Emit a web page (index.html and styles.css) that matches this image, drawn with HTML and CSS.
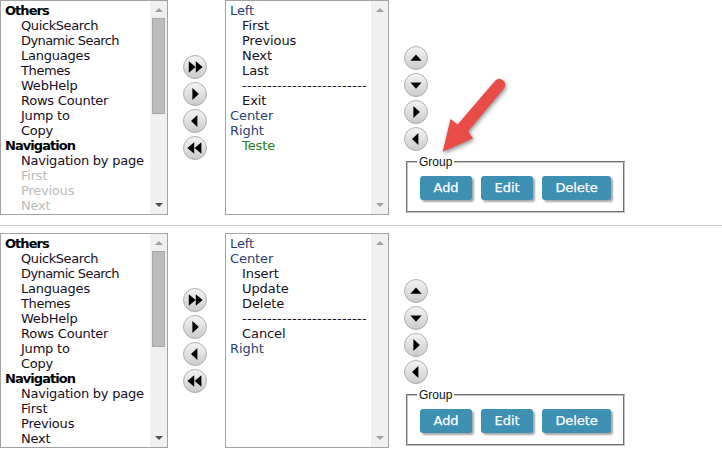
FILE: index.html
```html
<!DOCTYPE html>
<html lang="en">
<head>
<meta charset="utf-8">
<title>Toolbar settings</title>
<link rel="stylesheet" href="styles.css">
</head>
<body>
<svg class="defs" width="0" height="0" aria-hidden="true">
  <defs>
    <linearGradient id="disc" x1="0" y1="0" x2="0" y2="1">
      <stop offset="0" stop-color="#f4f4f4"/><stop offset=".5" stop-color="#e0e0e0"/><stop offset="1" stop-color="#c9c9c9"/>
    </linearGradient>
    <symbol id="base" viewBox="0 0 24 24"><circle cx="12" cy="12" r="11.5" fill="url(#disc)" stroke="#a8a8a8" stroke-width=".9"/></symbol>
    <symbol id="all-right" viewBox="0 0 24 24"><use href="#base"/><path d="M5.8 6.3 12.6 12l-6.8 5.7zM12.8 6.3l6.8 5.7-6.8 5.7z"/></symbol>
    <symbol id="right" viewBox="0 0 24 24"><use href="#base"/><path d="M9.4 6 15.8 12l-6.4 6z"/></symbol>
    <symbol id="left" viewBox="0 0 24 24"><use href="#base"/><path d="M14.4 6 8 12l6.4 6z"/></symbol>
    <symbol id="all-left" viewBox="0 0 24 24"><use href="#base"/><path d="M11.2 6.3 4.4 12l6.8 5.7zM18.4 6.3 11.6 12l6.8 5.7z"/></symbol>
    <symbol id="up" viewBox="0 0 24 24"><use href="#base"/><path d="M6.4 14.8 12 8.4l5.6 6.4z"/></symbol>
    <symbol id="down" viewBox="0 0 24 24"><use href="#base"/><path d="M6.4 9.6 12 15.8l5.6-6.2z"/></symbol>
  </defs>
</svg>

<section class="panel">
  <div class="list source">
    <ul class="options">
      <li class="heading">Others</li>
      <li class="snug">QuickSearch</li><li class="tight">Dynamic Search</li><li>Languages</li><li class="snug">Themes</li><li>WebHelp</li><li>Rows Counter</li><li>Jump to</li><li>Copy</li>
      <li class="heading">Navigation</li>
      <li>Navigation by page</li><li class="off">First</li><li class="off">Previous</li><li class="off">Next</li>
    </ul>
    <div class="scrollbar"><i class="arrow-up"></i><i class="thumb"></i><i class="arrow-down dark"></i></div>
  </div>
  <div class="moves">
    <svg><use href="#all-right"/></svg><svg><use href="#right"/></svg><svg><use href="#left"/></svg><svg><use href="#all-left"/></svg>
  </div>
  <div class="list target">
    <ul class="options">
      <li class="zone">Left</li>
      <li>First</li><li>Previous</li><li>Next</li><li>Last</li><li class="rule">-------------------------</li><li>Exit</li>
      <li class="zone">Center</li>
      <li class="zone">Right</li>
      <li class="group-item">Teste</li>
    </ul>
    <div class="scrollbar"><i class="arrow-up"></i><i class="arrow-down"></i></div>
  </div>
  <div class="side">
    <div class="sorts">
      <svg><use href="#up"/></svg><svg><use href="#down"/></svg><svg><use href="#right"/></svg><svg><use href="#left"/></svg>
    </div>
    <fieldset><legend>Group</legend><button>Add</button><button>Edit</button><button class="wide">Delete</button></fieldset>
  </div>
  <svg class="pointer" viewBox="0 0 80 90"><path d="M7.7 76.8 15.5 44 22.6 49.4 60.4 5.5A5.8 5.8 0 0 1 69.2 12.9L33 56.3 38 63.3z"/></svg>
</section>

<section class="panel second">
  <div class="list source">
    <ul class="options">
      <li class="heading">Others</li>
      <li class="snug">QuickSearch</li><li class="tight">Dynamic Search</li><li>Languages</li><li class="snug">Themes</li><li>WebHelp</li><li>Rows Counter</li><li>Jump to</li><li>Copy</li>
      <li class="heading">Navigation</li>
      <li>Navigation by page</li><li>First</li><li>Previous</li><li>Next</li>
    </ul>
    <div class="scrollbar"><i class="arrow-up"></i><i class="thumb"></i><i class="arrow-down dark"></i></div>
  </div>
  <div class="moves">
    <svg><use href="#all-right"/></svg><svg><use href="#right"/></svg><svg><use href="#left"/></svg><svg><use href="#all-left"/></svg>
  </div>
  <div class="list target">
    <ul class="options">
      <li class="zone">Left</li>
      <li class="zone">Center</li>
      <li>Insert</li><li>Update</li><li>Delete</li><li class="rule">-------------------------</li><li>Cancel</li>
      <li class="zone">Right</li>
    </ul>
    <div class="scrollbar"><i class="arrow-up"></i><i class="arrow-down"></i></div>
  </div>
  <div class="side">
    <div class="sorts">
      <svg><use href="#up"/></svg><svg><use href="#down"/></svg><svg><use href="#right"/></svg><svg><use href="#left"/></svg>
    </div>
    <fieldset><legend>Group</legend><button>Add</button><button>Edit</button><button class="wide">Delete</button></fieldset>
  </div>
</section>
</body>
</html>
```
FILE: styles.css
```css
* { box-sizing: border-box; }
body { margin: 0; background: #fff; overflow: hidden; font: 13px/15px "DejaVu Sans", sans-serif; color: #15101c; }
.defs { display: block; height: 0; }
.panel { position: relative; display: flex; align-items: flex-start; height: 226px; border-bottom: 1px solid #ccc; }
.panel.second { border-bottom: 0; padding-top: 7px; height: 227px; }
.list { display: flex; height: 215px; border: 1px solid #a3a3a3; background: #fff; }
.source { width: 168px; }
.target { width: 164px; margin-left: 18px; }
.options { flex: 1; min-width: 0; margin: 0; padding: 2px 0 0 4px; list-style: none; white-space: nowrap; overflow: hidden; }
.options li { height: 15px; padding-left: 16px; letter-spacing: -.22px; }
.target .options li { padding-left: 12px; letter-spacing: -.08px; }
.options li.snug { letter-spacing: -.4px; }
.options li.tight { letter-spacing: -.58px; }
.options li.heading { padding-left: 0; font-weight: bold; color: #000; letter-spacing: -.95px; }
.target .options .zone { padding-left: 0; color: #2b3f78; }
.options .off { color: #bbb; }
.options .group-item { color: #238023; }
.target .options li.rule { letter-spacing: .31px; }
.scrollbar { width: 17px; background: #f0f0f0; display: flex; flex-direction: column; align-items: center; padding: 7px 0; }
.arrow-up { border: 4px solid transparent; border-top: 0; border-bottom: 4px solid #a0a0a0; }
.arrow-down { margin-top: auto; border: 4px solid transparent; border-bottom: 0; border-top: 4px solid #a0a0a0; }
.arrow-down.dark { border-top-color: #505050; }
.thumb { width: 13px; height: 96px; margin-top: 6px; background: #bcbcbc; border: 1px solid #a8a8a8; }
.moves, .sorts { display: flex; flex-direction: column; gap: 3px; }
.moves svg, .sorts svg { display: block; width: 24px; height: 24px; }
.moves { margin: 55px 0 0 15px; }
.side { margin-left: 15px; }
.sorts { padding-top: 46px; }
fieldset { width: 219px; height: 58px; margin: 4px 0 0 2px; padding: 7px 0 0 12px; border: 2px groove #c4c4c4; display: flex; gap: 9px; align-items: flex-start; }
legend { margin-left: -3px; padding: 0 2px; font: 12px/14px "Liberation Sans", sans-serif; color: #111; }
button { width: 52px; height: 24px; padding: 0; border: 0; border-radius: 3px; background: #3e90b3; box-shadow: 2px 2px 2px rgba(0,0,0,.35); color: #fff; font: 13px/24px "DejaVu Sans", sans-serif; letter-spacing: -.1px; -webkit-text-stroke: .25px #fff; }
button.wide { width: 69px; }
.pointer { position: absolute; left: 435px; top: 75px; width: 80px; height: 90px; fill: #e94b47; filter: drop-shadow(1px 2px 2px rgba(0,0,0,.45)); }
```
